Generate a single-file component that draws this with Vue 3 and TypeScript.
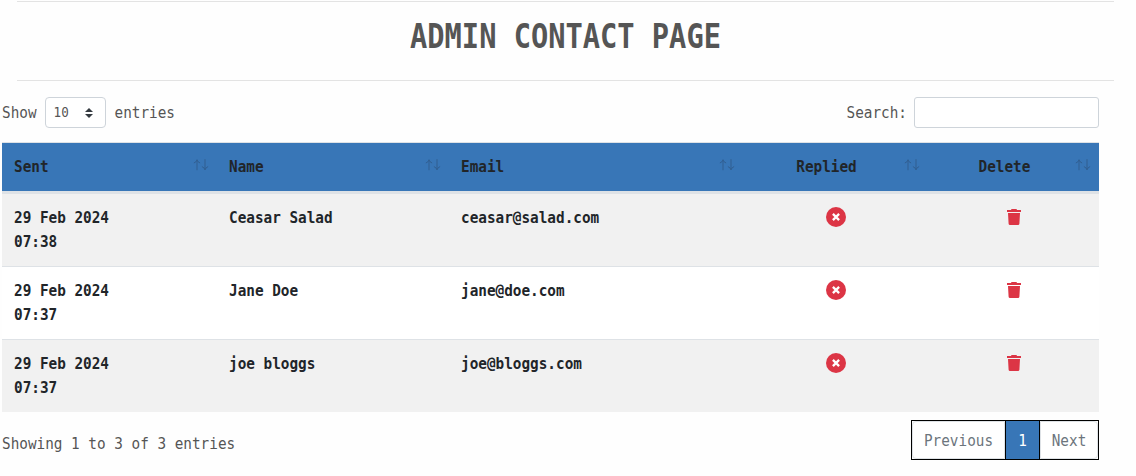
<script setup lang="ts">
interface Contact {
  date: string
  time: string
  name: string
  email: string
}

const columns: string[] = ['Sent', 'Name', 'Email', 'Replied', 'Delete']

const contacts: Contact[] = [
  { date: '29 Feb 2024', time: '07:38', name: 'Ceasar Salad', email: 'ceasar@salad.com' },
  { date: '29 Feb 2024', time: '07:37', name: 'Jane Doe', email: 'jane@doe.com' },
  { date: '29 Feb 2024', time: '07:37', name: 'joe bloggs', email: 'joe@bloggs.com' },
]
</script>

<template>
  <main class="page">
    <header class="banner">
      <h1><span class="tall">ADMIN CONTACT PAGE</span></h1>
    </header>

    <div class="content">
      <div class="controls">
        <div class="length">
          <span class="t">Show</span>
          <div class="select">
            <span class="t">10</span>
            <svg width="8" height="10" viewBox="0 0 4 5"><path fill="#343a40" d="M2 0L0 2h4zm0 5L0 3h4z" /></svg>
          </div>
          <span class="t">entries</span>
        </div>
        <label class="search">
          <span class="t">Search:</span>
          <input type="text" />
        </label>
      </div>

      <div class="table">
        <div class="row head">
          <div v-for="(column, i) in columns" :key="column" class="cell" :class="{ center: i > 2 }">
            <span class="t">{{ column }}</span>
            <svg class="sort" width="16" height="12" viewBox="0 0 16 12">
              <path d="M4 11.2V.9M.9 4Q3.3 3.2 4 .8Q4.7 3.2 7.1 4M12 .2v10.5M8.9 7.6Q11.3 8.4 12 10.8Q12.7 8.4 15.1 7.6" />
            </svg>
          </div>
        </div>
        <div v-for="contact in contacts" :key="contact.email" class="row body">
          <div class="cell sent">
            <span class="t">{{ contact.date }}</span>
            <span class="t">{{ contact.time }}</span>
          </div>
          <div class="cell"><span class="t">{{ contact.name }}</span></div>
          <div class="cell"><span class="t">{{ contact.email }}</span></div>
          <div class="cell center">
            <svg class="cross" width="20" height="20" viewBox="0 0 20 20">
              <circle cx="10" cy="10" r="10" fill="#dc3545" />
              <path d="M6.9 6.9l6.2 6.2M13.1 6.9l-6.2 6.2" stroke="#fff" stroke-width="2.3" />
            </svg>
          </div>
          <div class="cell center">
            <svg class="trash" width="14" height="16" viewBox="0 0 14 16">
              <path fill="#dc3545" d="M4 1L4.5 0h5l.5 1H14v2H0V1zM1 4h12l-.6 10.7a1.4 1.4 0 0 1-1.4 1.3H3a1.4 1.4 0 0 1-1.4-1.3z" />
            </svg>
          </div>
        </div>
      </div>

      <footer class="footer">
        <span class="t info">Showing 1 to 3 of 3 entries</span>
        <nav class="pager">
          <div class="item previous"><a><span class="t">Previous</span></a></div>
          <div class="item active"><a><span class="t">1</span></a></div>
          <div class="item next"><a><span class="t">Next</span></a></div>
        </nav>
      </footer>
    </div>
  </main>
</template>

<style>
body {
  background: #fff;
}
</style>

<style scoped>
* {
  box-sizing: border-box;
}

.page {
  width: 1136px;
  height: 476px;
  padding-top: 1px;
  overflow: hidden;
  background: #fefefe;
  color: #555;
  font-family: "DejaVu Sans Mono", monospace;
  font-size: 14.35px;
  line-height: 24px;
}

/* Narrow, tall lettering */
.t {
  display: inline-block;
  white-space: pre;
  transform: scaleY(1.12);
}

.banner {
  width: 1097px;
  height: 80px;
  margin-left: 17px;
  border-top: 1px solid #e3e3e3;
  border-bottom: 1px solid #e3e3e3;
}

h1 {
  margin: 16px 0 0;
  font-size: 28.7px;
  font-weight: 700;
  line-height: 38px;
  text-align: center;
}

.tall {
  display: inline-block;
  transform: scaleY(1.15);
}

.content {
  width: 1097px;
  margin-left: 2px;
}

.controls {
  display: flex;
  justify-content: space-between;
  height: 61px;
  padding-top: 16px;
}

.length,
.search {
  display: flex;
  align-items: center;
  height: 31px;
}

.length > .t,
.search > .t {
  margin-bottom: 2px;
}

.select {
  display: flex;
  align-items: center;
  justify-content: space-between;
  width: 61px;
  height: 31px;
  margin: 0 9px 0 8px;
  padding: 0 12px 0 8px;
  border: 1px solid #ced4da;
  border-radius: 4px;
  background: #fff;
  font-size: 12.6px;
}

.select .t {
  transform: translateY(-1px) scaleY(1.18);
}

.search input {
  width: 185px;
  height: 31px;
  margin-left: 7px;
  border: 1px solid #ced4da;
  border-radius: 3px;
  background: #fff;
}

.row {
  display: grid;
  grid-template-columns: 215px 232px 294px 185px 171px;
  color: #212529;
  font-weight: 700;
}

.row .t {
  transform: translateY(-0.6px) scaleY(1.12);
}

.head {
  height: 51px;
  border-top: 1px solid #dee2e6;
  border-bottom: 2px solid #dee2e6;
  background: #3876b7;
}

.cell {
  padding: 12px;
}

.center {
  text-align: center;
}

.head .cell {
  position: relative;
  padding-right: 30px;
}

.sort {
  position: absolute;
  top: 16px;
  right: 8px;
  fill: none;
  stroke: #315f91;
  stroke-width: 1;
}

.body {
  height: 73px;
  border-top: 1px solid #dee2e6;
  background: #fff;
}

.body:nth-child(even) {
  background: #f1f1f1;
}

.sent {
  display: flex;
  flex-direction: column;
  align-items: flex-start;
}

.cross,
.trash {
  display: block;
  margin: 1.4px auto 0;
}

.trash {
  margin-top: 3px;
}

.footer {
  display: flex;
  justify-content: space-between;
  padding-top: 8px;
}

.info {
  margin-top: 12px;
}

.pager {
  display: flex;
  width: 188px;
  height: 40px;
  border: 1px solid #000;
}

.item {
  display: flex;
}

.item + .item {
  border-left: 1px solid #000;
}

.item a {
  display: flex;
  align-items: center;
  justify-content: center;
  width: 100%;
  border: 1px solid #dee2e6;
  background: #fff;
  color: #6c757d;
}

.previous {
  width: 93px;
}

.previous a {
  border-radius: 4px 0 0 4px;
}

.active {
  width: 34px;
}

.item.active a {
  border-color: #3876b7;
  background: #3876b7;
  color: #fff;
}

.next {
  flex: 1;
}

.next a {
  border-radius: 0 4px 4px 0;
}
</style>
